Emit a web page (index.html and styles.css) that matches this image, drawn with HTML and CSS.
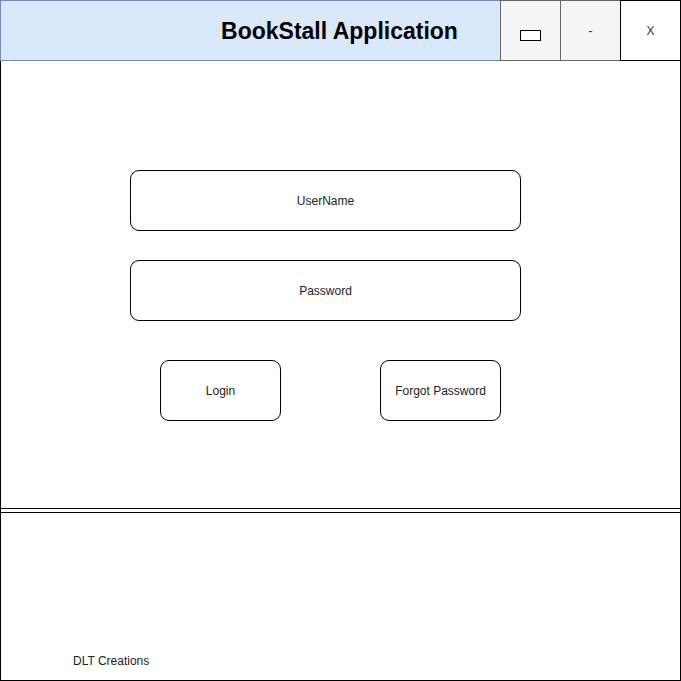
FILE: index.html
```html
<!DOCTYPE html>
<html>
<head>
<meta charset="utf-8">
<title>BookStall Application</title>
<link rel="stylesheet" href="styles.css">
</head>
<body>
<div class="window">
  <div class="titlebar">
    <div class="title"><span>BookStall Application</span></div>
    <div class="ctl ctl-gray"><span class="restore"></span></div>
    <div class="ctl ctl-gray"><span class="glyph">-</span></div>
    <div class="ctl ctl-white"><span class="glyph">X</span></div>
  </div>
  <div class="main">
    <div class="panel">
      <div class="field">UserName</div>
      <div class="field field-pass">Password</div>
      <div class="actions">
        <div class="btn">Login</div>
        <div class="btn btn-forgot">Forgot Password</div>
      </div>
    </div>
    <div class="footer">
      <span class="credit">DLT Creations</span>
    </div>
  </div>
</div>
</body>
</html>
```

FILE: styles.css
```css
* { box-sizing: border-box; }
html, body {
  margin: 0;
  padding: 0;
  background: #ffffff;
}
body {
  font-family: "Liberation Sans", Arial, sans-serif;
  color: #222222;
  font-size: 12px;
}
.window {
  width: 681px;
  height: 681px;
  display: flex;
  flex-direction: column;
}
.titlebar {
  display: flex;
  height: 61px;
  flex: none;
}
.title {
  width: 501px;
  height: 61px;
  background: #dae8fc;
  border: 1px solid #6c8ebf;
  display: flex;
  align-items: center;
  justify-content: center;
  padding-left: 178px;
  padding-top: 1px;
}
.title span {
  font-weight: bold;
  font-size: 23px;
  color: #000000;
  white-space: nowrap;
}
.ctl {
  width: 61px;
  height: 61px;
  margin-left: -1px;
  display: flex;
  align-items: center;
  justify-content: center;
}
.ctl-gray {
  background: #f5f5f5;
  border: 1px solid #666666;
}
.ctl-white {
  background: #ffffff;
  border: 1px solid #000000;
}
.restore {
  display: block;
  width: 21px;
  height: 11px;
  border: 1px solid #000000;
  background: #ffffff;
  margin-top: 9px;
}
.glyph {
  font-size: 12px;
  color: #333333;
  line-height: 14px;
}
.main {
  flex: 1;
  display: flex;
  flex-direction: column;
  border-left: 1px solid #000000;
  border-right: 1px solid #000000;
  border-bottom: 1px solid #000000;
}
.panel {
  height: 448px;
  border-bottom: 1px solid #000000;
  padding: 109px 0 0 129px;
  display: flex;
  flex-direction: column;
  align-items: flex-start;
}
.field {
  width: 391px;
  height: 61px;
  border: 1px solid #000000;
  border-radius: 9px;
  display: flex;
  align-items: center;
  justify-content: center;
}
.field-pass {
  margin-top: 29px;
}
.actions {
  display: flex;
  margin-top: 39px;
  margin-left: 30px;
  gap: 99px;
}
.btn {
  width: 121px;
  height: 61px;
  border: 1px solid #000000;
  border-radius: 9px;
  display: flex;
  align-items: center;
  justify-content: center;
}
.footer {
  flex: 1;
  margin-top: 3px;
  border-top: 1px solid #000000;
  display: flex;
  align-items: flex-end;
  padding: 0 0 12px 72px;
}
.credit {
  line-height: 14px;
}
```
